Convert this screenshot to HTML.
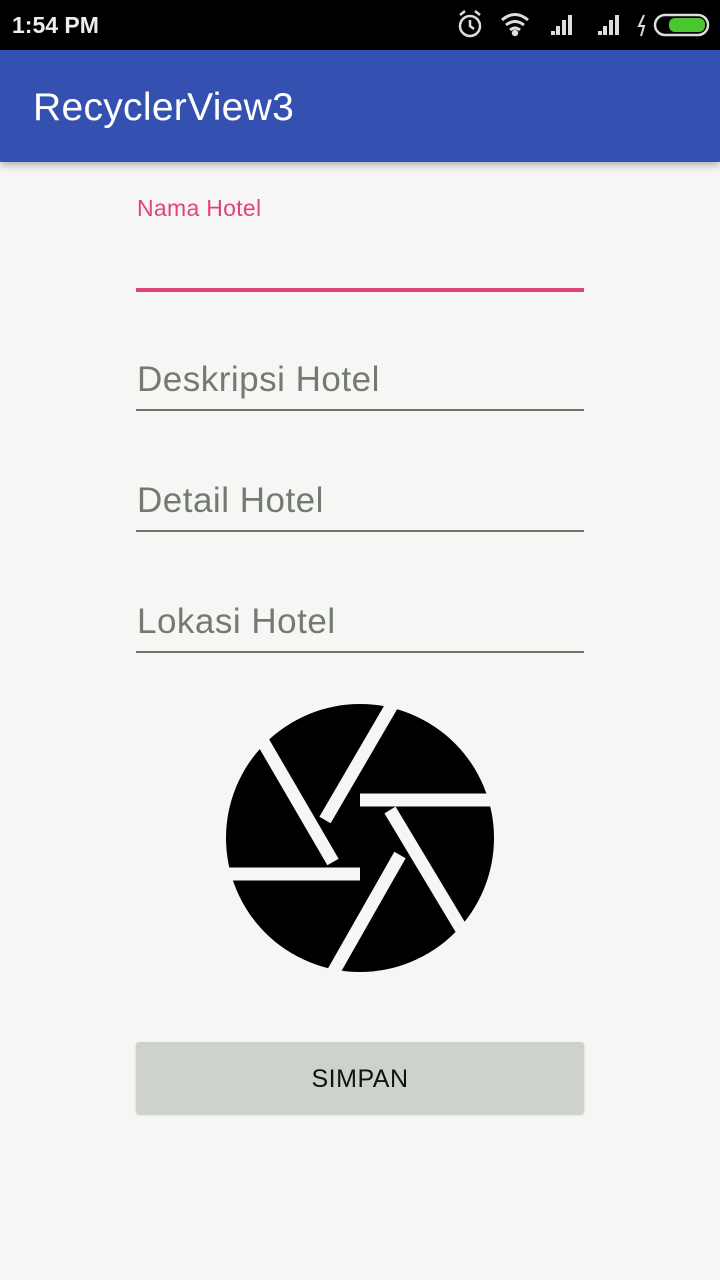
<!DOCTYPE html>
<html><head><style>
body{margin:0;width:720px;height:1280px;background:#f6f7f5;font-family:"Liberation Sans",sans-serif;position:relative;overflow:hidden}
.sb{position:absolute;left:0;top:0;width:720px;height:50px;background:#000;color:#fff}
.ab{position:absolute;left:0;top:50px;width:720px;height:112px;background:#3450b0;box-shadow:0 3px 8px rgba(0,0,0,.3)}
.t{position:absolute;white-space:nowrap}
.ln{position:absolute;left:136px;width:448px;height:2px;background:#6f766f}
.ph{font-size:35px;letter-spacing:0.5px;color:#737a73;left:137px}
</style></head><body>
<div class="sb">
<div class="t" style="left:12px;top:12px;font-size:23px;font-weight:bold;color:#eee">1:54 PM</div>
<svg width="280" height="50" style="position:absolute;left:440px;top:0" fill="none" stroke="#ddd" stroke-width="2.5">
<circle cx="30" cy="26" r="10"/><path d="M30 20v6l4 3M20 15l5-4M40 15l-5-4"/>
<path d="M62 20q13-11 26 0M66 25q9-7 18 0M70 30q5-4 10 0" stroke-width="3"/><circle cx="75" cy="33" r="2" fill="#ddd"/>
<path d="M108 34v0M113 31v4M118 26v9M124 20v15M130 15v20" stroke-width="4"/>
<path d="M155 34v0M160 31v4M165 26v9M171 20v15M177 15v20" stroke-width="4"/>
<path d="M204 15l-5 11h5l-3 10" stroke-width="2"/>
<rect x="215" y="15" width="53" height="20" rx="10"/>
<rect x="229" y="18" width="36" height="14" rx="6" fill="#4cc62e" stroke="none"/>
</svg>
</div>
<div class="ab"><div class="t" style="left:33px;top:36px;font-size:39px;letter-spacing:0.3px;color:#fff">RecyclerView3</div></div>
<div class="t" style="left:137px;top:195px;font-size:23px;letter-spacing:0.3px;color:#e0457a">Nama Hotel</div>
<div style="position:absolute;left:136px;top:288px;width:448px;height:4px;background:#e0457a"></div>
<div class="t ph" style="top:360px">Deskripsi Hotel</div><div class="ln" style="top:409px"></div>
<div class="t ph" style="top:481px">Detail Hotel</div><div class="ln" style="top:530px"></div>
<div class="t ph" style="top:602px">Lokasi Hotel</div><div class="ln" style="top:651px"></div>
<svg width="720" height="1280" style="position:absolute;left:0;top:0" stroke="#f6f7f5" stroke-width="13">
<circle cx="360" cy="838" r="134" fill="#000" stroke="none"/>
<path d="M360 800H500M220 874H360M395 700L325 820M262 740L333 862M390 810L465 935M400 855L330 978"/>
</svg>
<div style="position:absolute;left:136px;top:1042px;width:448px;height:72px;background:#cdd3cc;border-radius:3px;box-shadow:0 1px 2px rgba(0,0,0,.2);text-align:center;line-height:74px;font-size:25px;letter-spacing:0.5px;color:#111">SIMPAN</div>
</body></html>
